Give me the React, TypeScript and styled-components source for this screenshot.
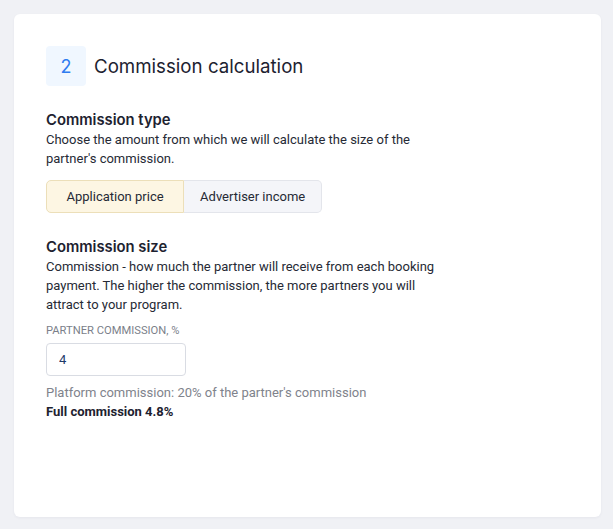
import React from "react";
import styled, { createGlobalStyle } from "styled-components";

const Global = createGlobalStyle`
  html, body { margin: 0; padding: 0; background: #f0f1f5; }
  body { font-family: Roboto, "Liberation Sans", sans-serif; color: #1f2330; }
`;

const Page = styled.div`
  padding: 14px 12px 12px 14px;
`;

const Card = styled.section`
  background: #ffffff;
  border-radius: 6px;
  height: 503px;
  box-sizing: border-box;
  padding: 32px;
  box-shadow: 0 1px 3px rgba(30, 40, 70, 0.05);
`;

const Header = styled.div`
  display: flex;
  align-items: center;
  gap: 8px;
  margin-bottom: 24px;
`;

const StepBadge = styled.div`
  width: 40px;
  height: 40px;
  border-radius: 4px;
  background: #f0f7ff;
  color: #2f7cf0;
  font-family: Inter, "Liberation Sans", sans-serif;
  font-size: 18px;
  display: flex;
  align-items: center;
  justify-content: center;
`;

const Title = styled.h2`
  margin: 0;
  font-family: Inter, "Liberation Sans", sans-serif;
  font-weight: 400;
  font-size: 18.7px;
  color: #1d2230;
`;

const Section = styled.div`
  margin-bottom: 24px;
`;

const SectionTitle = styled.h3`
  margin: 0;
  font-family: Inter, "Liberation Sans", sans-serif;
  font-weight: 600;
  font-size: 14.8px;
  line-height: 20px;
  color: #1d2230;
`;

const Description = styled.p`
  margin: 0;
  max-width: 390px;
  font-size: 13px;
  line-height: 19px;
  color: #262a35;
`;

const Toggle = styled.div`
  display: inline-flex;
  margin-top: 12px;
`;

const ToggleButton = styled.button<{ $active?: boolean; $first?: boolean }>`
  height: 33px;
  box-sizing: border-box;
  padding: 0 ${(p) => (p.$first ? "19.5px" : "16px")};
  font-family: Roboto, "Liberation Sans", sans-serif;
  font-size: 13px;
  color: #262a35;
  background: ${(p) => (p.$active ? "#fdf6e3" : "#f4f5f9")};
  border: 1px solid ${(p) => (p.$active ? "#ecdfb9" : "#e3e5eb")};
  border-radius: ${(p) => (p.$first ? "5px 0 0 5px" : "0 5px 5px 0")};
  ${(p) => (p.$first ? "" : "border-left: none;")}
  cursor: pointer;
`;

const FieldLabel = styled.div`
  margin-top: 10px;
  font-size: 11.2px;
  text-transform: uppercase;
  color: #7b7f8a;
`;

const Input = styled.input`
  display: block;
  margin-top: 6px;
  width: 140px;
  height: 33px;
  box-sizing: border-box;
  padding: 0 12px;
  border: 1px solid #d9dce3;
  border-radius: 4px;
  font-family: Roboto, "Liberation Sans", sans-serif;
  font-size: 13px;
  color: #1e3b6a;
  outline: none;
`;

const Note = styled.p`
  margin: 8px 0 0;
  font-size: 13px;
  line-height: 18px;
  color: #80838c;
`;

const Total = styled.p`
  margin: 1px 0 0;
  font-size: 13px;
  font-weight: 700;
  line-height: 18px;
  color: #1d2230;
`;

export default function App() {
  return (
    <Page>
      <Global />
      <Card>
        <Header>
          <StepBadge>2</StepBadge>
          <Title>Commission calculation</Title>
        </Header>
        <Section>
          <SectionTitle>Commission type</SectionTitle>
          <Description>
            Choose the amount from which we will calculate the size of the partner's commission.
          </Description>
          <Toggle>
            <ToggleButton $active $first>Application price</ToggleButton>
            <ToggleButton>Advertiser income</ToggleButton>
          </Toggle>
        </Section>
        <Section>
          <SectionTitle>Commission size</SectionTitle>
          <Description>
            Commission - how much the partner will receive from each booking payment. The higher the commission, the more partners you will attract to your program.
          </Description>
          <FieldLabel>Partner commission, %</FieldLabel>
          <Input defaultValue="4" />
          <Note>Platform commission: 20% of the partner's commission</Note>
          <Total>Full commission 4.8%</Total>
        </Section>
      </Card>
    </Page>
  );
}
